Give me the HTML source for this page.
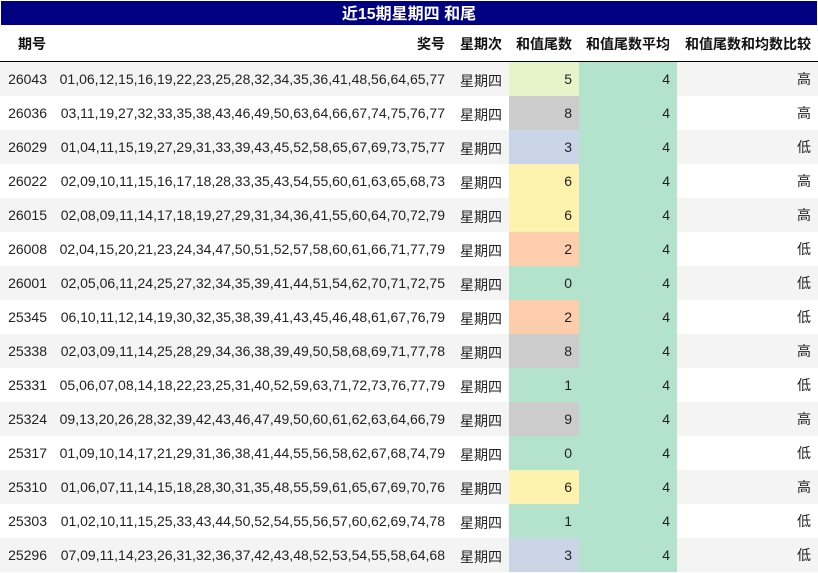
<!DOCTYPE html>
<html><head><meta charset="utf-8"><style>
body{margin:0;width:818px;height:573px;background:#fff;font-family:"Liberation Sans","Noto Sans CJK SC",sans-serif;font-size:14px;color:#222;overflow:hidden}
.t{height:26px;background:#000080;color:#fff;font-weight:bold;font-size:16px;text-align:center;line-height:27px;box-sizing:border-box;border:1px solid #fff}
table{border-collapse:collapse;table-layout:fixed;width:818px}
th{height:35px;font-weight:bold;font-size:14px;text-align:right;padding:0 7px 0 0;border-bottom:1.5px solid #000;color:#111}
td{height:34px;padding:0 7px 0 0;text-align:right;white-space:nowrap}
tr:nth-child(even) td{background:#f4f4f4}
td.w{padding-top:4px;box-sizing:border-box}
tr td.a{background:#b3e2cd!important}
.g1{background:#e6f5c9!important}.g2{background:#cccccc!important}.g3{background:#cbd5e8!important}.g4{background:#fff2ae!important}.g5{background:#fdcdac!important}.g6{background:#b3e2cd!important}
</style></head><body>
<div class="t">近15期星期四 和尾</div>
<table>
<colgroup><col style="width:54px"><col style="width:398px"><col style="width:57px"><col style="width:70px"><col style="width:98px"><col style="width:141px"></colgroup>
<tr><th style="text-align:left;padding:0 0 0 18px">期号</th><th>奖号</th><th>星期次</th><th>和值尾数</th><th>和值尾数平均</th><th>和值尾数和均数比较</th></tr>
<tr><td>26043</td><td>01,06,12,15,16,19,22,23,25,28,32,34,35,36,41,48,56,64,65,77</td><td class="w">星期四</td><td class="g1">5</td><td class="a">4</td><td>高</td></tr>
<tr><td>26036</td><td>03,11,19,27,32,33,35,38,43,46,49,50,63,64,66,67,74,75,76,77</td><td class="w">星期四</td><td class="g2">8</td><td class="a">4</td><td>高</td></tr>
<tr><td>26029</td><td>01,04,11,15,19,27,29,31,33,39,43,45,52,58,65,67,69,73,75,77</td><td class="w">星期四</td><td class="g3">3</td><td class="a">4</td><td>低</td></tr>
<tr><td>26022</td><td>02,09,10,11,15,16,17,18,28,33,35,43,54,55,60,61,63,65,68,73</td><td class="w">星期四</td><td class="g4">6</td><td class="a">4</td><td>高</td></tr>
<tr><td>26015</td><td>02,08,09,11,14,17,18,19,27,29,31,34,36,41,55,60,64,70,72,79</td><td class="w">星期四</td><td class="g4">6</td><td class="a">4</td><td>高</td></tr>
<tr><td>26008</td><td>02,04,15,20,21,23,24,34,47,50,51,52,57,58,60,61,66,71,77,79</td><td class="w">星期四</td><td class="g5">2</td><td class="a">4</td><td>低</td></tr>
<tr><td>26001</td><td>02,05,06,11,24,25,27,32,34,35,39,41,44,51,54,62,70,71,72,75</td><td class="w">星期四</td><td class="g6">0</td><td class="a">4</td><td>低</td></tr>
<tr><td>25345</td><td>06,10,11,12,14,19,30,32,35,38,39,41,43,45,46,48,61,67,76,79</td><td class="w">星期四</td><td class="g5">2</td><td class="a">4</td><td>低</td></tr>
<tr><td>25338</td><td>02,03,09,11,14,25,28,29,34,36,38,39,49,50,58,68,69,71,77,78</td><td class="w">星期四</td><td class="g2">8</td><td class="a">4</td><td>高</td></tr>
<tr><td>25331</td><td>05,06,07,08,14,18,22,23,25,31,40,52,59,63,71,72,73,76,77,79</td><td class="w">星期四</td><td class="g6">1</td><td class="a">4</td><td>低</td></tr>
<tr><td>25324</td><td>09,13,20,26,28,32,39,42,43,46,47,49,50,60,61,62,63,64,66,79</td><td class="w">星期四</td><td class="g2">9</td><td class="a">4</td><td>高</td></tr>
<tr><td>25317</td><td>01,09,10,14,17,21,29,31,36,38,41,44,55,56,58,62,67,68,74,79</td><td class="w">星期四</td><td class="g6">0</td><td class="a">4</td><td>低</td></tr>
<tr><td>25310</td><td>01,06,07,11,14,15,18,28,30,31,35,48,55,59,61,65,67,69,70,76</td><td class="w">星期四</td><td class="g4">6</td><td class="a">4</td><td>高</td></tr>
<tr><td>25303</td><td>01,02,10,11,15,25,33,43,44,50,52,54,55,56,57,60,62,69,74,78</td><td class="w">星期四</td><td class="g6">1</td><td class="a">4</td><td>低</td></tr>
<tr><td>25296</td><td>07,09,11,14,23,26,31,32,36,37,42,43,48,52,53,54,55,58,64,68</td><td class="w">星期四</td><td class="g3">3</td><td class="a">4</td><td>低</td></tr>
</table>
</body></html>
